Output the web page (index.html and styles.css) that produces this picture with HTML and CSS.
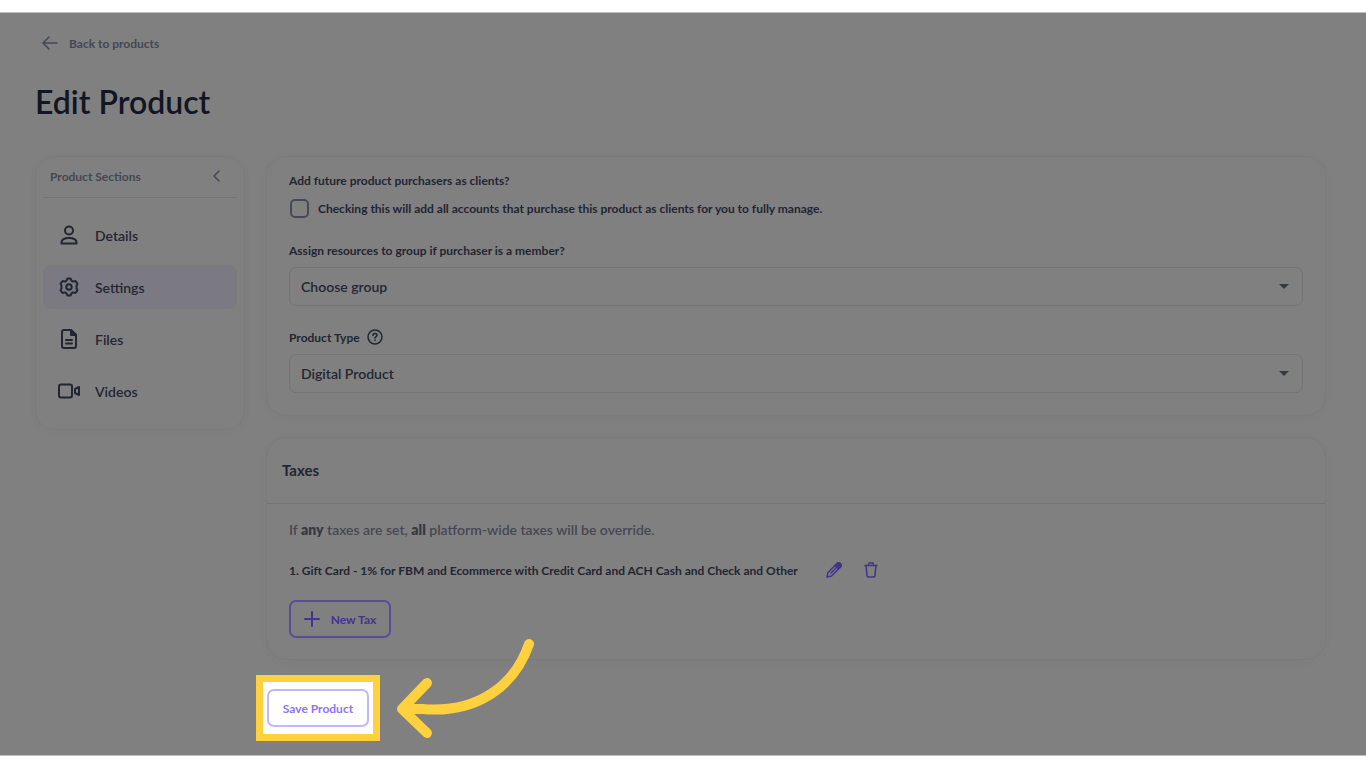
FILE: index.html
```html
<!DOCTYPE html>
<html lang="en">
<head>
    <meta charset="UTF-8">
    <title>Edit Product</title>
    <link rel="stylesheet" href="styles.css">
</head>
<body>
<div class="page">
    <a class="back" href="#">
        <svg width="18" height="16" viewBox="0 0 18 16"><path d="M8 2L2 8l6 6M2 8h14"/></svg>
        Back to products
    </a>
    <h1>Edit Product</h1>
    <div class="layout">
        <nav class="card sections">
            <div class="sections-head">
                <span>Product Sections</span>
                <button type="button" aria-label="Collapse">
                    <svg width="8" height="12" viewBox="0 0 8 12"><path d="M6 1L1 6l5 5"/></svg>
                </button>
            </div>
            <ul>
                <li><a href="#">
                    <svg width="24" height="24" viewBox="0 0 24 24"><circle cx="12" cy="7.500" r="4"/><path d="M4.500 20.500v-1c0-3 3-4.500 7.500-4.500s7.500 1.500 7.500 4.500v1z"/></svg>
                    Details
                </a></li>
                <li class="selected"><a href="#">
                    <svg width="24" height="24" viewBox="0 0 24 24"><circle cx="12" cy="12" r="2.700"/><path d="M10.500 3.500h3l1 2.200 1.500.9 2.500-.6 1.900 2.700-.9 2.200v2.200l.9 2.200-1.900 2.700-2.500-.6-1.500.9-1 2.200h-3l-1-2.200-1.500-.9-2.500.6-1.900-2.700.9-2.200v-2.200l-.9-2.200L5.500 6l2.500.6 1.500-.9z"/></svg>
                    Settings
                </a></li>
                <li><a href="#">
                    <svg width="24" height="24" viewBox="0 0 24 24"><path d="M14 3H7a2 2 0 0 0-2 2v14a2 2 0 0 0 2 2h10a2 2 0 0 0 2-2V8zM9 13h6M9 16.500h6"/><path class="solid" d="M14 3v5h5z"/></svg>
                    Files
                </a></li>
                <li><a href="#">
                    <svg width="24" height="24" viewBox="0 0 24 24"><rect x="2" y="5.500" width="13" height="13" rx="2"/><path d="M18 10l4-2v8l-4-2z"/></svg>
                    Videos
                </a></li>
            </ul>
        </nav>
        <main>
            <section class="card settings">
                <h2>Add future product purchasers as clients?</h2>
                <label class="check">
                    <input type="checkbox">
                    Checking this will add all accounts that purchase this product as clients for you to fully manage.
                </label>
                <label class="field-label" for="group">Assign resources to group if purchaser is a member?</label>
                <div class="select">
                    <select id="group"><option>Choose group</option></select>
                </div>
                <label class="field-label" for="type">Product Type
                    <svg width="16" height="16" viewBox="0 0 16 16"><circle cx="8" cy="8" r="7"/><path d="M6 6.500c0-2.700 4-2.500 4-.2 0 1.300-2 1.400-2 2.700M8 11v.5"/></svg>
                </label>
                <div class="select">
                    <select id="type"><option>Digital Product</option></select>
                </div>
            </section>
            <section class="card taxes">
                <h3>Taxes</h3>
                <div class="taxes-body">
                    <p class="note">If <b>any</b> taxes are set, <b>all</b> platform-wide taxes will be override.</p>
                    <div class="tax">
                        <span>1. Gift Card - 1% for FBM and Ecommerce with Credit Card and ACH Cash and Check and Other</span>
                        <button type="button" aria-label="Edit tax">
                            <svg width="16" height="16" viewBox="0 0 16 16"><path d="M1 15l1-4.500 8.500-8.500a2.300 2.300 0 0 1 3.500 3.500L5.500 14zM5 11l5-5"/><path class="solid" d="M9 3.500l2-2a2.300 2.300 0 0 1 3.500 3.500l-2 2z"/></svg>
                        </button>
                        <button type="button" aria-label="Delete tax">
                            <svg width="16" height="16" viewBox="0 0 16 16"><path d="M2 3.500h12M3 3.500l1 10q0 1.500 1.500 1.500h5q1.500 0 1.500-1.500l1-10M5 3.500L6 1h4l1 2.500"/></svg>
                        </button>
                    </div>
                    <button type="button" class="btn new-tax">
                        <svg width="16" height="16" viewBox="0 0 16 16"><path d="M8 1v14M1 8h14"/></svg>
                        New Tax
                    </button>
                </div>
            </section>
            <div class="highlight">
                <button type="button" class="btn save">Save Product</button>
                <svg class="arrow" width="142" height="104" viewBox="0 0 142 104"><path d="M135 7C121 48 84 77 28 72H8M33 46L8 72l25 24"/></svg>
            </div>
        </main>
    </div>
</div>
</body>
</html>
```
FILE: styles.css
```css
*{
    margin: 0;
    padding: 0;
    box-sizing: border-box;
}
body{
    padding: 12px 0;
    background: #fff;
    font-family: Lato, "Liberation Sans", sans-serif;
    font-size: 12px;
    font-weight: 700;
    color: #232532;
}
button, select{
    font: inherit;
    color: inherit;
    background: none;
    border: none;
}
a{
    color: inherit;
    text-decoration: none;
}
svg{
    flex: none;
    fill: none;
    stroke: currentColor;
    stroke-width: 2;
    stroke-linecap: round;
    stroke-linejoin: round;
}
.solid{
    fill: currentColor;
}
.page{
    min-height: calc(100vh - 24px);
    padding: 20px 40px 14px 35px;
    background: #808080;
    border: solid #bfbfbf;
    border-width: 1px 0;
}
.back{
    display: inline-flex;
    align-items: center;
    gap: 10px;
    height: 20px;
    margin-left: 6px;
    color: #454754;
}
.back svg{
    stroke-width: 1.500;
}
h1{
    margin: 28px 0 34px;
    line-height: 40px;
    font-size: 32px;
    font-weight: 600;
    color: #121522;
}
.layout{
    display: flex;
    align-items: flex-start;
    gap: 21px;
}
.card{
    border: 1px solid #7b7b7b;
    border-radius: 20px;
    box-shadow: 0 2px 12px rgba(0,0,0,0.02);
}
.sections{
    flex: none;
    width: 210px;
    padding: 0 7px 16px;
}
.sections-head{
    display: flex;
    justify-content: space-between;
    align-items: center;
    height: 41px;
    margin-bottom: 15px;
    padding: 0 16px 2px 7px;
    border-bottom: 1px solid #747474;
    color: #454754;
}
.sections-head button{
    display: flex;
}
.sections-head svg{
    stroke-width: 1.500;
}
.sections ul{
    display: grid;
    gap: 8px;
    list-style: none;
}
.sections li{
    border-radius: 8px;
}
.sections li.selected{
    background: #7b7a82;
}
.sections li a{
    display: flex;
    align-items: center;
    gap: 14px;
    height: 44px;
    padding-left: 14px;
    font-size: 14px;
    font-weight: 600;
}
main{
    flex: 1;
    min-width: 0;
}
.settings{
    margin-bottom: 21px;
    padding: 15px 22px 22px;
}
.settings h2{
    line-height: 18px;
    font-size: 12px;
    font-weight: 700;
}
.check{
    display: flex;
    align-items: center;
    gap: 9px;
    height: 20px;
    margin: 8px 0 22px 1px;
}
.check input{
    appearance: none;
    width: 19px;
    height: 19px;
    border: 2px solid #474958;
    border-radius: 5px;
}
.field-label{
    display: flex;
    align-items: center;
    gap: 7px;
    height: 20px;
    margin-bottom: 7px;
}
.field-label svg{
    stroke-width: 1.500;
}
.select{
    position: relative;
}
.select + .field-label{
    margin-top: 21px;
}
.select select{
    appearance: none;
    display: block;
    width: 100%;
    height: 39px;
    padding: 0 11px;
    border: 1px solid #747474;
    border-radius: 7px;
    font-size: 14px;
    font-weight: 600;
}
.select::after{
    content: "";
    position: absolute;
    right: 14px;
    top: 17px;
    border: 5px solid transparent;
    border-top-color: #363842;
    border-bottom: none;
}
.taxes h3{
    padding: 0 15px;
    line-height: 65px;
    border-bottom: 1px solid #747474;
    font-size: 15px;
    font-weight: 700;
}
.taxes-body{
    padding: 15px 22px 21px;
}
.note{
    line-height: 22px;
    font-size: 14px;
    font-weight: 600;
    color: #454754;
}
.note b{
    font-weight: 800;
    color: #363842;
}
.tax{
    display: flex;
    align-items: center;
    height: 20px;
    margin: 19px 0 20px;
}
.tax button{
    height: 16px;
    margin-left: 28px;
    color: #43338c;
}
.tax button + button{
    margin-left: 21px;
}
.tax svg{
    stroke-width: 1.500;
}
.btn{
    display: flex;
    justify-content: center;
    align-items: center;
    gap: 11px;
    width: 102px;
    height: 38px;
    border: 2px solid;
    border-radius: 7px;
}
.new-tax{
    border-color: #5b4c99;
    color: #43338c;
}
.highlight{
    position: relative;
    width: fit-content;
    margin: 15px 0 0 -10px;
    padding: 7px 4px;
    border: 7px solid #ffd13f;
    background: #fff;
}
.save{
    border-color: #c3b6fd;
    color: #8c74f8;
}
/* hand-drawn pointer next to the highlighted button */
.arrow{
    position: absolute;
    left: 131px;
    bottom: -7px;
    color: #ffd13f;
    stroke-width: 10;
}
```
